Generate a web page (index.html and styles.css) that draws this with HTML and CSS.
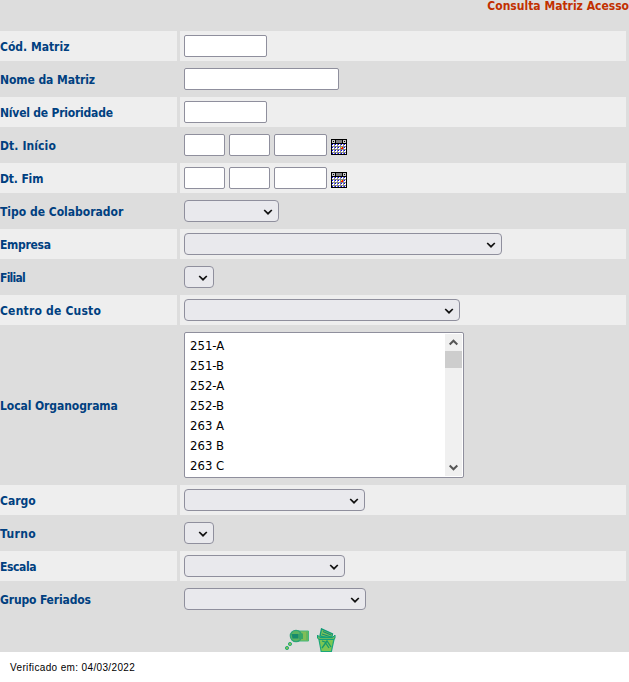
FILE: index.html
```
<!DOCTYPE html>
<html lang="pt-BR">
<head>
<meta charset="utf-8">
<title>Consulta Matriz Acesso</title>
<link rel="stylesheet" href="styles.css">
</head>
<body>
<svg width="0" height="0" class="defs" aria-hidden="true">
  <defs>
    <pattern id="days" x="1" y="5" width="3" height="3" patternUnits="userSpaceOnUse">
      <path fill="#fff" d="M0 0h3v3H0z"/>
      <path fill="#888" d="M0 2h3v1H0zM2 0h1v3H2z"/>
      <path fill="#00f" d="M0 0h1v1H0z"/>
    </pattern>
    <symbol id="calendar" viewBox="0 0 16 16">
      <path d="M0 0h16v16H0z"/>
      <path fill="#c4c4c4" d="M1 1h3v3H1zM12 1h3v3h-3z"/>
      <path fill="#808080" d="M5 1h6v3H5z"/>
      <path d="M2 2h1v1H2zM13 2h1v1h-1z"/>
      <path fill="url(#days)" d="M1 5h14v10H1z"/>
      <path fill="red" d="M10 8h2v2h-2z"/>
      <path fill="#ff0" d="M10 8h1v1h-1z"/>
    </symbol>
    <symbol id="chevron" viewBox="0 0 10 6">
      <path fill="none" stroke="#111" stroke-width="1.7" d="M1.200 1 5 4.700 8.800 1"/>
    </symbol>
  </defs>
</svg>
<main class="panel">
  <h1 class="title">Consulta Matriz Acesso</h1>
  <form class="form">
    <div class="row"><label class="label">Cód. Matriz</label><div class="field"><input class="w83"></div></div>
    <div class="row"><label class="label nome">Nome da Matriz</label><div class="field"><input class="w155"></div></div>
    <div class="row"><label class="label nivel">Nível de Prioridade</label><div class="field"><input class="w83"></div></div>
    <div class="row"><label class="label inicio">Dt. Início</label><div class="field"><input class="w41"><input class="w41"><input class="w53"><svg class="cal"><use href="#calendar"/></svg></div></div>
    <div class="row"><label class="label fim">Dt. Fim</label><div class="field"><input class="w41"><input class="w41"><input class="w53"><svg class="cal"><use href="#calendar"/></svg></div></div>
    <div class="row"><label class="label">Tipo de Colaborador</label><div class="field"><div class="select w95"><svg><use href="#chevron"/></svg></div></div></div>
    <div class="row"><label class="label empresa">Empresa</label><div class="field"><div class="select w318"><svg><use href="#chevron"/></svg></div></div></div>
    <div class="row"><label class="label filial">Filial</label><div class="field"><div class="select w30"><svg><use href="#chevron"/></svg></div></div></div>
    <div class="row"><label class="label centro">Centro de Custo</label><div class="field"><div class="select w276"><svg><use href="#chevron"/></svg></div></div></div>
    <div class="row tall"><label class="label nome">Local Organograma</label><div class="field">
      <div class="listbox">
        <ul><li>251-A</li><li>251-B</li><li>252-A</li><li>252-B</li><li>263 A</li><li>263 B</li><li>263 C</li></ul>
        <div class="scrollbar">
          <svg class="up" viewBox="0 0 17 17"><path d="M4.7 10.500 8.500 6.700l3.800 3.800"/></svg>
          <div class="thumb"></div>
          <svg class="down" viewBox="0 0 17 17"><path d="M4.700 6.500l3.800 3.800 3.800-3.800"/></svg>
        </div>
      </div></div></div>
    <div class="row alt"><label class="label">Cargo</label><div class="field"><div class="select w181"><svg><use href="#chevron"/></svg></div></div></div>
    <div class="row"><label class="label turno">Turno</label><div class="field"><div class="select w30"><svg><use href="#chevron"/></svg></div></div></div>
    <div class="row alt"><label class="label escala">Escala</label><div class="field"><div class="select w161"><svg><use href="#chevron"/></svg></div></div></div>
    <div class="row"><label class="label grupo">Grupo Feriados</label><div class="field"><div class="select w182"><svg><use href="#chevron"/></svg></div></div></div>
  </form>
  <div class="actions">
    <svg width="25" height="24" viewBox="0 0 25 24">
      <path fill="#80bd58" stroke="#42b87c" d="M13 3h10.500v10H13z"/>
      <path fill="#65b65c" d="M21 3.500h2v9h-2z"/>
      <circle cx="11" cy="8" r="5.700" fill="#5bb461" stroke="#2ca477" stroke-width="1.200"/>
      <path fill="#178a6c" d="M6.500 6h7v4.500h-6z"/>
      <path fill="#36a668" d="M14 5.500h4v5.500h-4z"/>
      <g fill="#86c34e" stroke="#2cad7c"><circle cx="5" cy="16" r="1.600"/><circle cx="2" cy="20" r="1.600"/></g>
    </svg>
    <svg width="20" height="25" viewBox="0 0 20 25">
      <path fill="#7fc25a" stroke="#119a75" stroke-width="1.300" d="M4 8 5.500.800l11 5-1 5z"/>
      <path fill="none" stroke="#148e70" stroke-width="1.300" d="M7 3.500l8 3.500M6 6l9 3"/>
      <path fill="#7cc653" stroke="#1ba77b" stroke-width="1.200" d="m2.500 9 2.700 14.500h10.200L18.500 9z"/>
      <path fill="#68ba60" stroke="#14a078" d="M1.500 7 4 9.500h12.500L19 7v3l-1 1.500H3L1.500 10z"/>
      <path fill="none" stroke="#159a6d" stroke-width="1.300" d="m6 20 5-7 4 6M6 13l3 1 4 6"/>
    </svg>
  </div>
</main>
<footer class="footer">Verificado em: 04/03/2022</footer>
</body>
</html>
```
FILE: styles.css
```
* { box-sizing: border-box; }
body {
  margin: 0;
  background: #fff;
  font-family: "DejaVu Sans Condensed", "DejaVu Sans", sans-serif;
  font-stretch: condensed;
  overflow: hidden;
}
.defs { display: block; height: 0; }
.panel { height: 652px; background: #ddd; }
.title {
  margin: 0;
  height: 31px;
  font-size: 12px;
  line-height: 12px;
  text-align: right;
  color: #c23000;
  white-space: nowrap;
}
.form { display: flex; flex-direction: column; gap: 3px; margin: 0; padding-right: 3px; }
.row { display: grid; grid-template-columns: 177px 1fr; gap: 3px; height: 30px; }
.row:nth-child(-n+9):nth-child(odd) > *, .row.alt > * { background: #eee; }
.row.tall { height: 154px; }
.label {
  display: flex;
  align-items: center;
  padding-top: 2px;
  font-size: 12px;
  font-weight: bold;
  color: #004080;
  white-space: nowrap;
}
.nome { letter-spacing: -.07px; }
.nivel { letter-spacing: -.21px; }
.inicio { letter-spacing: .1px; }
.fim { letter-spacing: -.15px; }
.empresa { letter-spacing: -.3px; }
.filial { letter-spacing: -.75px; }
.centro { letter-spacing: .2px; }
.turno { letter-spacing: .4px; }
.escala { letter-spacing: -.4px; }
.grupo { letter-spacing: -.15px; }
.field { display: flex; align-items: flex-start; gap: 4px; padding: 4px; }
input, .select, .listbox { border: 1px solid #8f8f9d; }
input { height: 22px; padding: 0; margin: 0; border-radius: 2px; background: #fff; outline: 0; }
.select {
  display: flex;
  align-items: center;
  justify-content: flex-end;
  height: 22px;
  padding: 1px 5px 0 0;
  border-radius: 4px;
  background: #e9e9ed;
}
.select svg { width: 10px; height: 6px; }
.cal { width: 16px; height: 16px; margin-top: 5px; shape-rendering: crispEdges; }
.listbox { display: flex; width: 280px; height: 146px; padding: 1px; border-radius: 2px; background: #fff; }
.listbox ul { flex: 1; margin: 0; padding: 2px 0 0 4px; list-style: none; font-size: 13px; line-height: 20px; color: #000; }
.listbox li { height: 20px; }
.scrollbar { display: flex; flex-direction: column; width: 17px; background: #f0f0f0; }
.scrollbar svg { width: 17px; height: 17px; fill: none; stroke: #555; stroke-width: 2; }
.thumb { height: 17px; background: #cdcdcd; }
.scrollbar .down { margin-top: auto; }
.w30 { width: 30px; }
.w41 { width: 41px; }
.w53 { width: 53px; }
.w83 { width: 83px; }
.w95 { width: 95px; }
.w155 { width: 155px; }
.w161 { width: 161px; }
.w181 { width: 181px; }
.w182 { width: 182px; }
.w276 { width: 276px; }
.w318 { width: 318px; }
.actions { display: flex; gap: 6px; padding: 14px 0 0 285px; }
.footer { padding: 9px 0 0 10px; font: 10px/13px "Liberation Sans", Arial, sans-serif; letter-spacing: .36px; color: #000; }
```
